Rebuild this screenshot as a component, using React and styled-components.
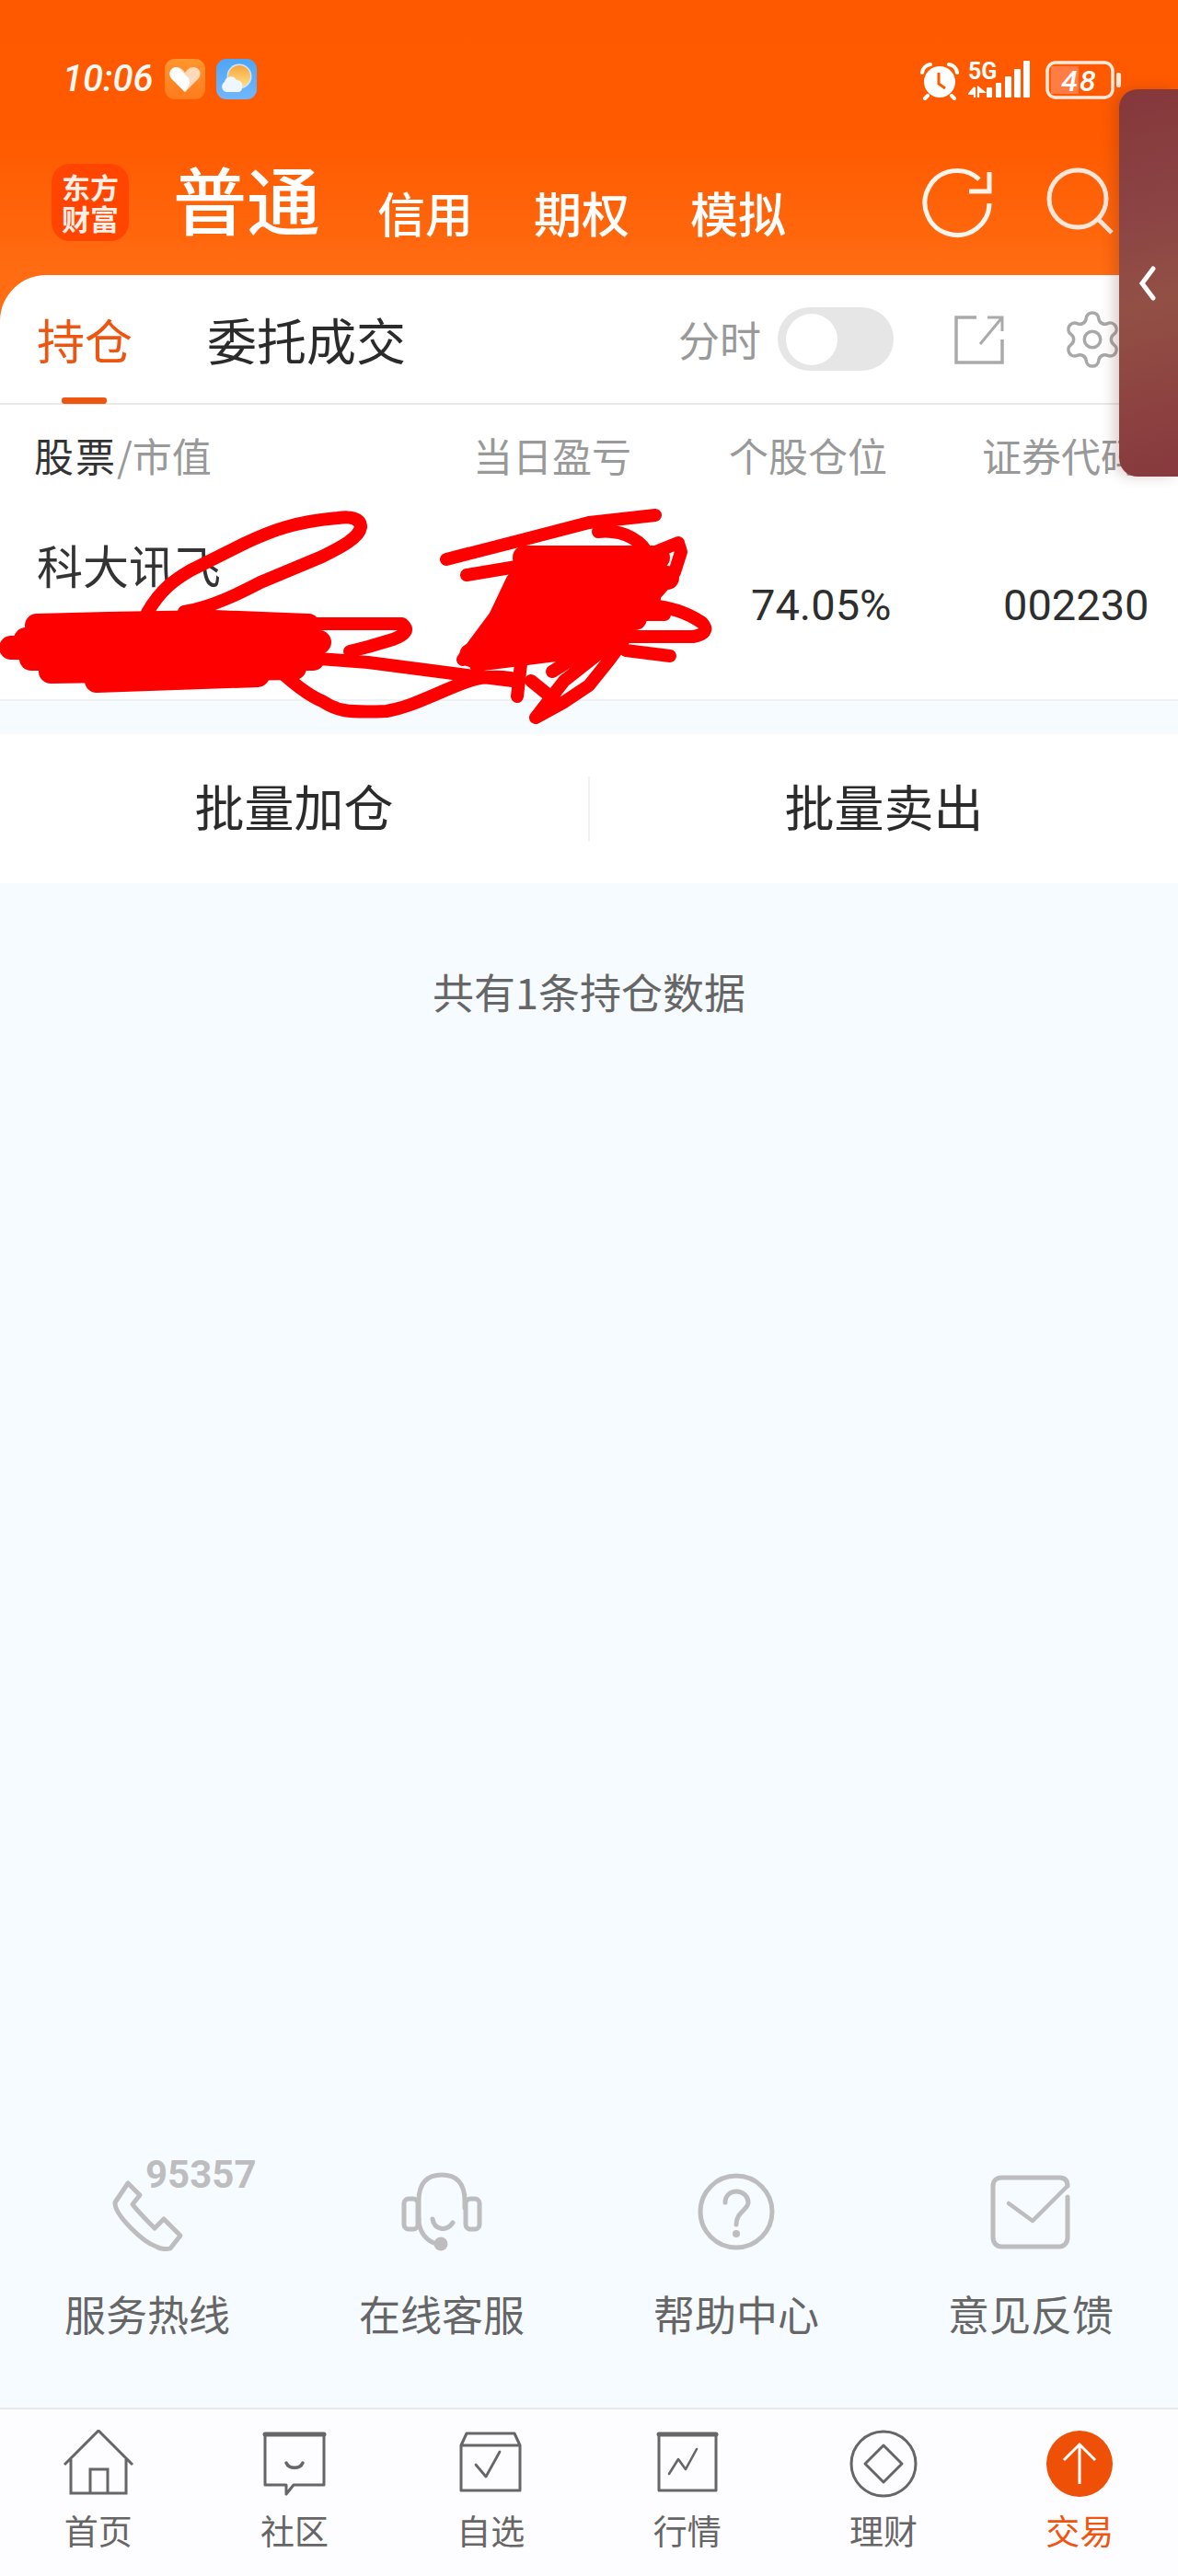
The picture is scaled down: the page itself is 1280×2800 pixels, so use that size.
import React from "react";
import styled, { createGlobalStyle } from "styled-components";
import { Settings } from "lucide-react";

const Global = createGlobalStyle`
  html, body { margin: 0; padding: 0; background: #f5fbff; }
  body { font-family: "Noto Sans CJK SC", "Noto Sans", sans-serif; }
`;

const Page = styled.div`
  position: relative; width: 1280px; height: 2800px; overflow: hidden;
  display: flex; flex-direction: column; background: #f5fbff; color: #333;
`;
const Top = styled.header`
  background: linear-gradient(180deg, #ff5900 0, #ff5a00 150px, #ff6c12 299px, #ff6c12 100%);
`;
const StatusBar = styled.div`
  height: 170px; box-sizing: border-box; padding: 64px 62px 0 68px;
  display: flex; align-items: flex-start; color: #fff;
`;
const Clock = styled.span`
  font: italic 500 40px/44px Roboto, sans-serif; color: #fff8f2; width: 111px;
`;
const AppBadges = styled.div`display: flex; gap: 12px;`;
const StatusRight = styled.div`margin-left: auto; display: flex; align-items: flex-start;`;
const NavRow = styled.nav`
  height: 129px; box-sizing: border-box; padding: 0 65px 0 56px;
  display: flex; align-items: flex-start;
`;
const LogoMark = styled.svg`margin: 8px 48px 0 0; flex: none;`;
const NavTabs = styled.div`display: flex; gap: 66px;`;
const NavTab = styled.span`
  color: #fff; font-size: ${p => (p.$active ? "80px" : "52px")};
  line-height: ${p => (p.$active ? "88px" : "122px")};
  font-weight: 500;
  width: ${p => (p.$active ? "156px" : "auto")}; white-space: nowrap;
`;
const NavActions = styled.div`margin-left: auto; display: flex; gap: 55px; margin-top: 10px;`;
const Card = styled.div`
  height: 141px; box-sizing: border-box; background: #fff; border-radius: 50px 0 0 0;
  border-bottom: 2px solid #e9e9e9; padding: 0 58px 0 40px;
  display: flex; align-items: center;
`;
const Tab = styled.div`
  position: relative; font-size: ${p => (p.$active ? "52px" : "54px")}; line-height: 60px; margin-right: 81px;
  color: ${p => (p.$active ? "#ee5511" : "#2b2b2b")}; white-space: nowrap;
  ${p => p.$active && `&::after {
    content: ""; position: absolute; left: 27px; bottom: -40px; width: 49px; height: 7px;
    border-radius: 3px; background: #ee5511;
  }`}
`;
const TabTools = styled.div`margin-left: auto; display: flex; align-items: center;`;
const ToolLabel = styled.span`font-size: 45px; color: #999; margin-right: 18px; line-height: 60px;`;
const Toggle = styled.div`
  width: 126px; height: 69px; border-radius: 35px; background: #e6e6e6; margin-right: 66px;
  display: flex; align-items: center; padding-left: 9px; box-sizing: border-box;
`;
const Knob = styled.div`width: 56px; height: 56px; border-radius: 50%; background: #fff;`;
const ShareWrap = styled.div`display: flex; margin-right: 61px;`;

const Table = styled.section`background: #fff;`;
const Columns = styled.div`
  display: grid; grid-template-columns: 477px 278px 275px 1fr;
  padding-left: ${p => (p.$row ? "40px" : "37px")};
`;
const HeadRow = styled(Columns)`
  height: 115px; box-sizing: border-box; padding-bottom: 8px; align-items: center; font-size: 43px; color: #999;
`;
const Dark = styled.span`color: #333; letter-spacing: 2px;`;
const HeadCell = styled.span`white-space: nowrap;`;
const DataRow = styled(Columns)`
  height: 207px; box-sizing: border-box; border-bottom: 2px solid #edf0f4; align-items: center;
`;
const StockName = styled.div`align-self: start; padding-top: 28px; font-size: 50px; line-height: 60px; color: #333;`;
const Num = styled.div`
  font: 400 47px/56px Roboto, sans-serif; color: #2e2e2e; white-space: nowrap;
  padding-left: ${p => p.$pad}px;
`;
const Actions = styled.div`
  margin-top: 36px; height: 162px; background: #fff; display: flex; align-items: center;
`;
const ActionBtn = styled.div`
  flex: 1; text-align: center; font-size: 54px; color: #2b2b2b; line-height: 70px; padding-bottom: 6px;
`;
const Divider = styled.div`width: 2px; height: 70px; background: #f1f1f1;`;
const CountNote = styled.p`
  margin: 88px 0 0; text-align: center; font-size: 45px; line-height: 60px; color: #666;
`;
const Services = styled.section`
  margin-top: auto; display: grid; grid-template-columns: repeat(4, 1fr); padding-bottom: 72px;
`;
const Service = styled.div`display: flex; flex-direction: column; align-items: center;`;
const ServiceIcon = styled.div`position: relative; width: 100px; height: 100px; display: flex;`;
const Hotline = styled.span`
  position: absolute; left: 48px; top: -8px; font: 700 42px/40px Roboto, sans-serif; color: #bdbdbf;
`;
const ServiceLabel = styled.span`margin-top: 33px; font-size: 45px; line-height: 60px; color: #666;`;
const TabBar = styled.footer`
  height: 183px; box-sizing: border-box; background: #fdfcfe; border-top: 2px solid #e9e9e9;
  display: grid; grid-template-columns: repeat(6, 1fr); padding-top: 22px;
`;
const BarItem = styled.div`
  display: flex; flex-direction: column; align-items: center;
  color: ${p => (p.$active ? "#ee5511" : "#666")};
`;
const BarLabel = styled.span`margin-top: 12px; font-size: 37px; line-height: 46px;`;
const SidePanel = styled.aside`
  position: absolute; left: 1216px; top: 97px; width: 64px; height: 421px;
  border-radius: 20px 0 0 20px;
  background: linear-gradient(165deg, #85373a 0%, #8b4344 30%, #925045 55%, #8c4040 85%, #87393d 100%);
  box-shadow: -6px 0 14px rgba(90, 40, 30, .22);
  display: flex; align-items: center; justify-content: flex-start; padding-left: 21px; box-sizing: border-box;
`;
const Scribble = styled.svg`position: absolute; left: 0; top: 540px;`;

const Stroke = { fill: "none", stroke: "currentColor", strokeLinecap: "round", strokeLinejoin: "round" };

const Logo = () => (
  <LogoMark width="84" height="84" viewBox="0 0 84 84">
    <rect width="84" height="84" rx="20" fill="#ff4500" />
    <text x="42" y="38" textAnchor="middle" fontFamily="'Noto Sans CJK SC', sans-serif" fontWeight="700" fontSize="31" fill="#ffeee6">东方</text>
    <text x="42" y="72" textAnchor="middle" fontFamily="'Noto Sans CJK SC', sans-serif" fontWeight="700" fontSize="31" fill="#ffeee6">财富</text>
  </LogoMark>
);
const HeartBadge = () => (
  <svg width="44" height="44" viewBox="0 0 44 44">
    <defs><linearGradient id="h" x1="0" y1="0" x2="0" y2="1"><stop offset="0" stopColor="#ff962e" /><stop offset="1" stopColor="#ff7b1c" /></linearGradient></defs>
    <rect width="44" height="44" rx="11" fill="url(#h)" />
    <path d="M22 36 L7 21 C3 15 7 9 13 9 C17 9 20 12 22 15 C24 12 27 9 31 9 C37 9 41 15 37 21 Z" fill="#ffd9b8" />
    <path d="M22 36 L7 21 C3 15 7 9 13 9 C17 10 19 14 22 17 L26 21 C28 24 27 30 22 36 Z" fill="#fff" />
  </svg>
);
const WeatherBadge = () => (
  <svg width="44" height="44" viewBox="0 0 44 44">
    <defs>
      <linearGradient id="w" x1="0" y1="0" x2="0" y2="1"><stop offset="0" stopColor="#4ea6f5" /><stop offset="1" stopColor="#72b6fb" /></linearGradient>
      <linearGradient id="s" x1="0" y1="0" x2="0" y2="1"><stop offset="0" stopColor="#f7a53a" /><stop offset="1" stopColor="#ffe08a" /></linearGradient>
    </defs>
    <rect width="44" height="44" rx="11" fill="url(#w)" />
    <circle cx="25" cy="19" r="13.5" fill="#cfe6fb" />
    <circle cx="25" cy="19" r="12" fill="url(#s)" />
    <path d="M11 36 a6 6 0 0 1 -2 -11 a7 7 0 0 1 13 -2 a6 6 0 0 1 6 8 a5 5 0 0 1 -3 5 Z" fill="#eef7ff" />
  </svg>
);
const Alarm = () => (
  <svg width="44" height="44" viewBox="0 0 44 44" style={{ marginRight: 9, marginTop: 2 }}>
    <circle cx="22" cy="23" r="17" fill="#fff" />
    <path d="M3 13 A10 10 0 0 1 12 4 M41 13 A10 10 0 0 0 32 4 M9 38 L6 41 M35 38 L38 41" fill="none" stroke="#fff" strokeWidth="4" strokeLinecap="round" />
    <path d="M21 13 V25 L28 30" fill="none" stroke="#ff5a00" strokeWidth="3" />
  </svg>
);
const Signal = () => (
  <svg width="68" height="44" viewBox="0 0 68 44" style={{ marginRight: 16 }}>
    <text x="0" y="22" fontFamily="Roboto, sans-serif" fontWeight="700" fontSize="25" fill="#fff">5G</text>
    <path d="M7 31 V42 M7 31 L1 38 H7 M11 42 V31 L17 36 H11 Z" stroke="#fff" strokeWidth="2.2" fill="#fff" />
    <rect x="20" y="31" width="6" height="11" rx="1" fill="#fff" />
    <rect x="30" y="26" width="6" height="16" rx="1" fill="#fff" />
    <rect x="40" y="19" width="7" height="23" rx="1" fill="#fff" />
    <rect x="50" y="11" width="7" height="31" rx="1" fill="#fff" />
    <rect x="60" y="2" width="7" height="40" rx="1" fill="#fff" />
  </svg>
);
const Battery = () => (
  <svg width="82" height="44" viewBox="0 0 82 44">
    <rect x="2" y="4" width="71" height="38" rx="9" fill="none" stroke="#ffe9dc" strokeWidth="3.5" />
    <path d="M6 8 H36 V38 H6 Z" fill="#ff7c45" />
    <text x="37" y="35" textAnchor="middle" fontFamily="Roboto, sans-serif" fontStyle="italic" fontWeight="500" fontSize="32" fill="#fff" letterSpacing="2">48</text>
    <rect x="77" y="15" width="5" height="16" rx="2" fill="#ffe9dc" />
  </svg>
);
const Refresh = () => (
  <svg width="80" height="80" viewBox="0 0 80 80" style={{ color: "#fff4ec" }}>
    <path d="M75 41 A35 35 0 1 1 64 15" {...Stroke} strokeLinecap="butt" strokeWidth="5" />
    <path d="M53 28 H75 V7" {...Stroke} strokeLinecap="butt" strokeLinejoin="miter" strokeWidth="5" />
  </svg>
);
const Search = () => (
  <svg width="80" height="80" viewBox="0 0 80 80" style={{ color: "#ffe6d8" }}>
    <circle cx="36" cy="36" r="31" {...Stroke} strokeWidth="5" />
    <path d="M58 58 L73 73" {...Stroke} strokeLinecap="butt" strokeWidth="5" />
  </svg>
);
const Share = () => (
  <svg width="54" height="54" viewBox="0 0 54 54" style={{ color: "#aaa" }}>
    <path d="M24 3 H2 V52 H52 V27" {...Stroke} strokeLinecap="butt" strokeLinejoin="miter" strokeWidth="3.5" />
    <path d="M36 3 H52 V18 M52 3 L28 32" {...Stroke} strokeLinecap="butt" strokeLinejoin="miter" strokeWidth="3" />
  </svg>
);
const Phone = () => (
  <svg width="100" height="100" viewBox="0 0 100 100" style={{ color: "#bdbdbf" }}>
    <path d="M29 21 L15 42 C14 55 45 85 60 90 C65 93 72 93 75 92 L86 78 L68 60 L58 70 C50 62 40 52 34 44 L42 34 Z" {...Stroke} strokeWidth="5" />
  </svg>
);
const Headset = () => (
  <svg width="100" height="100" viewBox="0 0 100 100" style={{ color: "#bdbdbf" }}>
    <path d="M25 60 V40 C25 20 35 12 50 12 C65 12 75 20 75 40 V48" {...Stroke} strokeWidth="5" />
    <rect x="9" y="38" width="15" height="33" rx="5" {...Stroke} strokeWidth="5" />
    <rect x="76" y="38" width="15" height="33" rx="5" {...Stroke} strokeWidth="5" />
    <path d="M25 60 C25 75 35 85 45 87 M40 60 C42 72 55 74 62 64" {...Stroke} strokeWidth="5" />
    <circle cx="49" cy="87" r="7.5" fill="#bdbdbf" />
  </svg>
);
const Help = () => (
  <svg width="100" height="100" viewBox="0 0 100 100" style={{ color: "#bdbdbf" }}>
    <circle cx="50" cy="52" r="39" {...Stroke} strokeWidth="5" />
    <path d="M38 42 C38 34 44 30 50 30 C57 30 63 35 63 42 C63 50 50 52 50 66" {...Stroke} strokeWidth="5" />
    <circle cx="50" cy="76" r="4" fill="#bdbdbf" />
  </svg>
);
const Mail = () => (
  <svg width="100" height="100" viewBox="0 0 100 100" style={{ color: "#bdbdbf" }}>
    <path d="M90 36 V80 C90 86 86 90 81 90 H18 C13 90 9 86 9 80 V24 C9 18 13 15 18 15 H81 C87 15 90 18 90 24" {...Stroke} strokeWidth="5" />
    <path d="M26 43 L52 62 L89 25" {...Stroke} strokeWidth="4.5" />
  </svg>
);
const IconSvg = ({ children }) => (
  <svg width="84" height="74" viewBox="0 0 84 74">{children}</svg>
);
const HomeIcon = () => (
  <IconSvg>
    <path d="M5 38 L42 1 L79 38 M12 32 V69 H72 V32 M33 69 V43 H52 V69" {...Stroke} strokeLinejoin="miter" strokeLinecap="butt" strokeWidth="3" />
  </IconSvg>
);
const ChatIcon = () => (
  <IconSvg>
    <path d="M10 5 H74 V60 H41 L33 70 V60 H10 Z" {...Stroke} strokeWidth="3" strokeLinejoin="round" />
    <path d="M10 5 H74" {...Stroke} strokeWidth="5" />
    <path d="M33 36 C36 43 48 43 51 36" {...Stroke} strokeWidth="3.5" />
  </IconSvg>
);
const BoxIcon = () => (
  <IconSvg>
    <path d="M10 17 L16 4 H68 L74 17 V66 H10 Z M10 17 H74" {...Stroke} strokeWidth="3" />
    <path d="M26 38 L37 51 L52 24" {...Stroke} strokeWidth="2.8" />
  </IconSvg>
);
const ChartIcon = () => (
  <IconSvg>
    <path d="M11 5 H73 V66 H11 Z" {...Stroke} strokeWidth="3" />
    <path d="M11 5 H73" {...Stroke} strokeWidth="5" />
    <path d="M22 48 L32 32 L40 43 L52 21" {...Stroke} strokeWidth="2.6" />
  </IconSvg>
);
const WealthIcon = () => (
  <IconSvg>
    <circle cx="42" cy="37" r="35" {...Stroke} strokeWidth="3" />
    <path d="M42 17 L62 37 L42 57 L22 37 Z" {...Stroke} strokeWidth="3" />
  </IconSvg>
);
const TradeIcon = () => (
  <IconSvg>
    <circle cx="42" cy="37" r="36" fill="#ee5008" />
    <path d="M42 59 V16 M25 33 L42 16 L59 33" fill="none" stroke="#fff" strokeWidth="3" />
  </IconSvg>
);

const services = [
  { label: "服务热线", Icon: Phone, extra: "95357" },
  { label: "在线客服", Icon: Headset },
  { label: "帮助中心", Icon: Help },
  { label: "意见反馈", Icon: Mail },
];
const bar = [
  { label: "首页", Icon: HomeIcon },
  { label: "社区", Icon: ChatIcon },
  { label: "自选", Icon: BoxIcon },
  { label: "行情", Icon: ChartIcon },
  { label: "理财", Icon: WealthIcon },
  { label: "交易", Icon: TradeIcon, active: true },
];
const pen = [
  "M160 666 C175 640 190 630 207 620 L267 590 C295 577 320 567 367 563 C380 561 392 563 392 573 C390 585 370 595 350 605 L283 633 C260 645 230 660 200 665",
  "M343 678 L400 678 L437 678 C445 685 440 690 427 695 L400 703 L380 708",
  "M347 716 L400 720 L500 733 L557 740",
  "M307 732 C325 748 340 758 350 762 C365 772 375 775 420 773 C450 768 480 750 510 740 C525 735 540 735 555 737",
  "M485 608 L567 587 L640 568 L712 560",
  "M507 625 L567 615 L640 600",
  "M650 578 C680 575 700 590 705 605",
  "M700 605 L737 590 L740 600 L733 622 L700 660",
  "M695 668 L722 668 M707 658 C730 660 750 668 763 677 C770 685 765 690 753 692 L680 692",
  "M680 707 L728 713",
  "M557 630 L538 670 L503 717 L540 695",
  "M562 757 L567 713 M582 780 L613 740 L660 703 M582 780 L613 763 L640 745 L660 720 L677 697",
  "M517 723 L620 710 M577 740 L593 753 M600 730 L640 705",
];
const solid = [
  "M40 680 L117 678 L233 676 L335 680",
  "M28 695 L347 698",
  "M12 704 L340 708",
  "M34 716 L340 716",
  "M55 730 L320 726",
  "M105 740 L280 734",
  "M570 606 H715",
  "M565 628 H725",
  "M555 650 H705",
  "M548 672 H690",
  "M530 694 H670",
  "M512 712 L640 702",
];

export default function App() {
  return (
    <Page>
      <Global />
      <Top>
        <StatusBar>
          <Clock>10:06</Clock>
          <AppBadges>
            <HeartBadge />
            <WeatherBadge />
          </AppBadges>
          <StatusRight>
            <Alarm />
            <Signal />
            <Battery />
          </StatusRight>
        </StatusBar>
        <NavRow>
          <Logo />
          <NavTabs>
            <NavTab $active>普通</NavTab>
            <NavTab>信用</NavTab>
            <NavTab>期权</NavTab>
            <NavTab>模拟</NavTab>
          </NavTabs>
          <NavActions>
            <Refresh />
            <Search />
          </NavActions>
        </NavRow>
        <Card>
          <Tab $active>持仓</Tab>
          <Tab>委托成交</Tab>
          <TabTools>
            <ToolLabel>分时</ToolLabel>
            <Toggle><Knob /></Toggle>
            <ShareWrap><Share /></ShareWrap>
            <Settings size={70} strokeWidth={1.2} color="#a8a8a8" />
          </TabTools>
        </Card>
      </Top>
      <Table>
        <HeadRow>
          <HeadCell><Dark>股票</Dark>/市值</HeadCell>
          <HeadCell>当日盈亏</HeadCell>
          <HeadCell>个股仓位</HeadCell>
          <HeadCell>证券代码</HeadCell>
        </HeadRow>
        <DataRow $row>
          <StockName>科大讯飞</StockName>
          <span />
          <Num $pad={21}>74.05%</Num>
          <Num $pad={20}>002230</Num>
        </DataRow>
      </Table>
      <Actions>
        <ActionBtn>批量加仓</ActionBtn>
        <Divider />
        <ActionBtn>批量卖出</ActionBtn>
      </Actions>
      <CountNote>共有1条持仓数据</CountNote>
      <Services>
        {services.map(({ label, Icon, extra }) => (
          <Service key={label}>
            <ServiceIcon>
              <Icon />
              {extra && <Hotline>{extra}</Hotline>}
            </ServiceIcon>
            <ServiceLabel>{label}</ServiceLabel>
          </Service>
        ))}
      </Services>
      <TabBar>
        {bar.map(({ label, Icon, active }) => (
          <BarItem key={label} $active={active}>
            <Icon />
            <BarLabel>{label}</BarLabel>
          </BarItem>
        ))}
      </TabBar>
      <Scribble width="800" height="260" viewBox="0 540 800 260" fill="none" stroke="#ff0000" strokeLinecap="round" strokeLinejoin="round">
        {solid.map((d, i) => <path key={i} d={d} strokeWidth="26" />)}
        {pen.map((d, i) => <path key={i} d={d} strokeWidth="14" />)}
      </Scribble>
      <SidePanel>
        <svg width="20" height="38" viewBox="0 0 20 38">
          <path d="M16 3 L4 19 L16 35" fill="none" stroke="#fff" strokeWidth="5" strokeLinecap="round" />
        </svg>
      </SidePanel>
    </Page>
  );
}
